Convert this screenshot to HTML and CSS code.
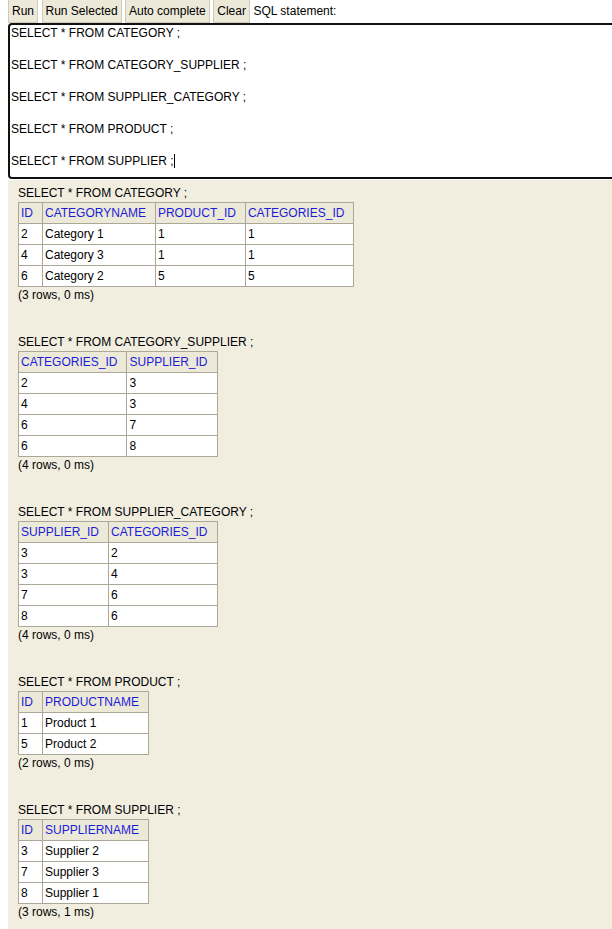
FILE: index.html
```html
<!DOCTYPE html>
<html>
<head>
<meta charset="utf-8">
<title>H2 Console</title>
<link rel="stylesheet" href="styles.css">
</head>
<body>
<div class="toolbar">
  <span class="btn">Run</span>
  <span class="btn">Run Selected</span>
  <span class="btn">Auto complete</span>
  <span class="btn">Clear</span>
  <span class="label">SQL statement:</span>
</div>
<div class="editor"><div class="line">SELECT * FROM CATEGORY ;</div><div class="line">&nbsp;</div><div class="line">SELECT * FROM CATEGORY_SUPPLIER ;</div><div class="line">&nbsp;</div><div class="line">SELECT * FROM SUPPLIER_CATEGORY ;</div><div class="line">&nbsp;</div><div class="line">SELECT * FROM PRODUCT ;</div><div class="line">&nbsp;</div><div class="line">SELECT * FROM SUPPLIER ;<span class="caret"></span></div></div>
<div class="result">
  <div class="block">
    <div class="sql">SELECT * FROM CATEGORY ;</div>
    <table>
      <tr><th>ID</th><th>CATEGORYNAME</th><th>PRODUCT_ID</th><th>CATEGORIES_ID</th></tr>
      <tr><td>2</td><td>Category 1</td><td>1</td><td>1</td></tr>
      <tr><td>4</td><td>Category 3</td><td>1</td><td>1</td></tr>
      <tr><td>6</td><td>Category 2</td><td>5</td><td>5</td></tr>
    </table>
    <div class="info">(3 rows, 0 ms)</div>
  </div>
  <div class="block">
    <div class="sql">SELECT * FROM CATEGORY_SUPPLIER ;</div>
    <table>
      <tr><th>CATEGORIES_ID</th><th>SUPPLIER_ID</th></tr>
      <tr><td>2</td><td>3</td></tr>
      <tr><td>4</td><td>3</td></tr>
      <tr><td>6</td><td>7</td></tr>
      <tr><td>6</td><td>8</td></tr>
    </table>
    <div class="info">(4 rows, 0 ms)</div>
  </div>
  <div class="block">
    <div class="sql">SELECT * FROM SUPPLIER_CATEGORY ;</div>
    <table>
      <tr><th>SUPPLIER_ID</th><th>CATEGORIES_ID</th></tr>
      <tr><td>3</td><td>2</td></tr>
      <tr><td>3</td><td>4</td></tr>
      <tr><td>7</td><td>6</td></tr>
      <tr><td>8</td><td>6</td></tr>
    </table>
    <div class="info">(4 rows, 0 ms)</div>
  </div>
  <div class="block">
    <div class="sql">SELECT * FROM PRODUCT ;</div>
    <table>
      <tr><th>ID</th><th>PRODUCTNAME</th></tr>
      <tr><td>1</td><td>Product 1</td></tr>
      <tr><td>5</td><td>Product 2</td></tr>
    </table>
    <div class="info">(2 rows, 0 ms)</div>
  </div>
  <div class="block">
    <div class="sql">SELECT * FROM SUPPLIER ;</div>
    <table>
      <tr><th>ID</th><th>SUPPLIERNAME</th></tr>
      <tr><td>3</td><td>Supplier 2</td></tr>
      <tr><td>7</td><td>Supplier 3</td></tr>
      <tr><td>8</td><td>Supplier 1</td></tr>
    </table>
    <div class="info">(3 rows, 1 ms)</div>
  </div>
</div>
</body>
</html>
```
FILE: styles.css
```css
html, body {
  margin: 0;
  padding: 0;
  background: #fff;
  overflow: hidden;
}
body {
  font: 12px/16px "Liberation Sans", Arial, sans-serif;
  color: #000;
}
.toolbar {
  display: flex;
  align-items: stretch;
  gap: 3.5px;
  padding-left: 8px;
  height: 23px;
}
.btn {
  display: flex;
  align-items: center;
  background: #ece9d8;
  border: 1px solid #cfcbbb;
  border-top: 0;
  padding: 0 3px 1px;
  color: #000;
}
.label {
  display: flex;
  align-items: center;
  padding-bottom: 1px;
}
.editor {
  margin-left: 8px;
  width: 700px;
  height: 150px;
  border: 2px solid #111;
  border-radius: 4px;
  padding: 0 1px 2px;
  background: #fff;
}
.line {
  height: 16px;
  white-space: pre;
}
.caret {
  display: inline-block;
  width: 0;
  height: 14px;
  border-left: 1px solid #000;
  vertical-align: -3px;
}
.result {
  margin-top: 1px;
  margin-left: 8px;
  background: #f1eee0;
  padding: 5px 10px 40px;
  min-height: 800px;
  display: flex;
  flex-direction: column;
  gap: 31px;
}
.sql {
  margin-bottom: 1px;
}
table {
  border-collapse: collapse;
}
th, td {
  border: 1px solid #aca899;
  padding: 2px;
  text-align: left;
  vertical-align: top;
  font-weight: normal;
  line-height: 16px;
}
th {
  background: #ece9d8;
  color: #1c1cd8;
  padding-right: 9px;
}
td {
  background: #fff;
}
```
